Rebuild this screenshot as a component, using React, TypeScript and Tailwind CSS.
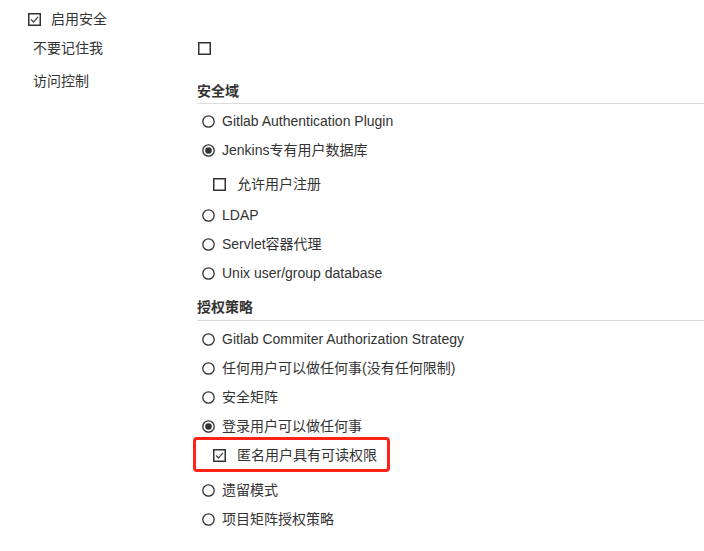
import React from "react";

const font = "font-['Liberation_Sans','Noto_Sans_CJK_SC',sans-serif]";

function CheckBox({ checked = false }: { checked?: boolean }) {
  return (
    <svg width="13" height="13" viewBox="0 0 13 13" className="shrink-0">
      <rect x="0.75" y="0.75" width="11.5" height="11.5" fill="#fff" stroke="#333" strokeWidth="1.5" />
      {checked && <path d="M3 6.5 L5.5 9 L10 3.8" fill="none" stroke="#444" strokeWidth="1.2" />}
    </svg>
  );
}

function Radio({ checked = false }: { checked?: boolean }) {
  return (
    <svg width="13" height="13" viewBox="0 0 13 13" className="shrink-0">
      <circle cx="6.5" cy="6.5" r="5.7" fill="#fff" stroke="#333" strokeWidth="1.3" />
      {checked && <circle cx="6.5" cy="6.5" r="3.3" fill="#333" />}
    </svg>
  );
}

function RadioRow({ label, checked }: { label: string; checked?: boolean }) {
  return (
    <div className="flex h-[29px] items-center gap-[7px] pl-[5px]">
      <Radio checked={checked} />
      <span>{label}</span>
    </div>
  );
}

function Section({ title }: { title: string }) {
  return (
    <div className="border-b border-[#dcdcdc] pb-[2px] font-bold leading-[20px]">{title}</div>
  );
}

export default function App() {
  return (
    <div className={`${font} h-[551px] w-[704px] overflow-hidden bg-white text-[14px] text-[#333]`}>
      {/* 启用安全 */}
      <div className="flex h-[38px] items-center gap-[10px] pl-[28px]">
        <CheckBox checked />
        <span>启用安全</span>
      </div>

      <div className="flex">
        <div className="w-[197px] shrink-0 pl-[33px]">
          <div className="flex h-[20px] items-center">不要记住我</div>
          <div className="pt-[13px] leading-[20px]">访问控制</div>
        </div>

        <div className="flex-1">
          <div className="flex h-[20px] items-center pl-[1px]">
            <CheckBox />
          </div>

          <div className="pt-[23px]">
            <Section title="安全域" />
            <div className="mt-[3px]">
              <RadioRow label="Gitlab Authentication Plugin" />
              <RadioRow label="Jenkins专有用户数据库" checked />
              <div className="flex h-[36px] items-center gap-[11px] pl-[16px] pt-[2px]">
                <CheckBox />
                <span>允许用户注册</span>
              </div>
              <RadioRow label="LDAP" />
              <RadioRow label="Servlet容器代理" />
              <RadioRow label="Unix user/group database" />
            </div>

            <div className="pt-[9px]">
              <div className="border-b border-[#dcdcdc] pb-[3px] font-bold leading-[20px]">授权策略</div>
            </div>
            <div className="mt-[4px]">
              <RadioRow label="Gitlab Commiter Authorization Strategy" />
              <RadioRow label="任何用户可以做任何事(没有任何限制)" />
              <RadioRow label="安全矩阵" />
              <RadioRow label="登录用户可以做任何事" checked />
              <div className="-ml-[4px] -mt-[4px] flex h-[35px] w-[197px] items-center gap-[11px] rounded-[4px] border-[3px] border-[#ff2218] pl-[17px] pt-[2px]">
                <CheckBox checked />
                <span>匿名用户具有可读权限</span>
              </div>
              <div className="mt-[4px]">
                <RadioRow label="遗留模式" />
                <RadioRow label="项目矩阵授权策略" />
              </div>
            </div>
          </div>
        </div>
      </div>
    </div>
  );
}
